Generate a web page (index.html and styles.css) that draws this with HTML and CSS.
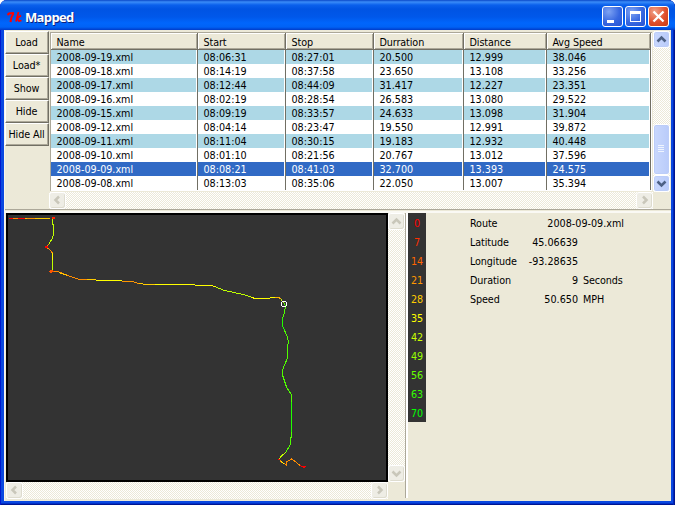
FILE: index.html
```html
<!DOCTYPE html>
<html lang="en">
<head>
<meta charset="utf-8">
<title>Mapped</title>
<link rel="stylesheet" href="styles.css">
</head>
<body>
<div class="window">
  <header class="titlebar">
    <svg class="logo" width="16" height="16" viewBox="0 0 16 16" fill="none" stroke="#f00"><path stroke-width="2" d="M.5 6L2 4.500L7 4M6.500 4.500L4.500 8L3.500 13"/><path stroke-width="1.700" d="M11.500 3L9 12.500M14 6.500L10 9.500L12 12L14.500 11.500"/></svg>
    <h1>Mapped</h1>
    <div class="controls">
      <span class="ctl"><svg width="19" height="19"><path d="M4 13h7v3H4z" fill="#fff"/></svg></span>
      <span class="ctl"><svg width="19" height="19"><path d="M4 4h11v11H4zM5 7v7h9V7z" fill="#fff" fill-rule="evenodd"/></svg></span>
      <span class="ctl close"><svg width="19" height="19"><path d="M4.500 4.500l10 10M14.500 4.500l-10 10" stroke="#fff" stroke-width="2.300"/></svg></span>
    </div>
  </header>
  <main class="client">
    <section class="top">
      <nav class="tools"><button>Load</button><button>Load*</button><button>Show</button><button>Hide</button><button>Hide All</button></nav>
      <div class="listing">
        <div class="table">
          <div class="row head"><span>Name</span><span>Start</span><span>Stop</span><span>Durration</span><span>Distance</span><span>Avg Speed</span></div>
          <div class="row odd"><span>2008-09-19.xml</span><span>08:06:31</span><span>08:27:01</span><span>20.500</span><span>12.999</span><span>38.046</span></div>
          <div class="row"><span>2008-09-18.xml</span><span>08:14:19</span><span>08:37:58</span><span>23.650</span><span>13.108</span><span>33.256</span></div>
          <div class="row odd"><span>2008-09-17.xml</span><span>08:12:44</span><span>08:44:09</span><span>31.417</span><span>12.227</span><span>23.351</span></div>
          <div class="row"><span>2008-09-16.xml</span><span>08:02:19</span><span>08:28:54</span><span>26.583</span><span>13.080</span><span>29.522</span></div>
          <div class="row odd"><span>2008-09-15.xml</span><span>08:09:19</span><span>08:33:57</span><span>24.633</span><span>13.098</span><span>31.904</span></div>
          <div class="row"><span>2008-09-12.xml</span><span>08:04:14</span><span>08:23:47</span><span>19.550</span><span>12.991</span><span>39.872</span></div>
          <div class="row odd"><span>2008-09-11.xml</span><span>08:11:04</span><span>08:30:15</span><span>19.183</span><span>12.932</span><span>40.448</span></div>
          <div class="row"><span>2008-09-10.xml</span><span>08:01:10</span><span>08:21:56</span><span>20.767</span><span>13.012</span><span>37.596</span></div>
          <div class="row selected"><span>2008-09-09.xml</span><span>08:08:21</span><span>08:41:03</span><span>32.700</span><span>13.393</span><span>24.575</span></div>
          <div class="row"><span>2008-09-08.xml</span><span>08:13:03</span><span>08:35:06</span><span>22.050</span><span>13.007</span><span>35.394</span></div>
        </div>
        <div class="hbar"><i class="sb off"><svg width="15" height="14"><path d="M9 3.500L5.500 7L9 10.500"/></svg></i><i class="sb off"><svg width="15" height="14"><path d="M6 3.500L9.500 7L6 10.500"/></svg></i></div>
      </div>
      <div class="vbar live"><i class="sb"><svg width="15" height="15"><path d="M3.500 9.500L7.500 5.500L11.500 9.500"/></svg></i><i class="space"></i><i class="sb thumb"><svg width="15" height="49"><path d="M4 20.500h6M4 22.500h6M4 24.500h6M4 26.500h6"/></svg></i><i class="sb"><svg width="15" height="15"><path d="M3.500 5.500L7.500 9.500L11.500 5.500"/></svg></i></div>
    </section>
    <section class="bottom">
      <div class="mapframe">
        <svg class="map" width="378" height="265" viewBox="8 215 378 265" fill="none" shape-rendering="crispEdges">
          <path stroke="#ff8c00" d="M9 218.500H35"/><path stroke="#f00" d="M9 218.500h4M18 218.500h7"/><path stroke="#ffc800" d="M25 218.500h2M35 218.500h15"/><path stroke="#f20" stroke-width="2" d="M52 218h3"/>
          <path stroke="#bfff00" d="M52.500 219V224L53.500 225V235L52 239L49 244"/>
          <path stroke="#ff8c00" d="M49 244L46 247L49 249L52.500 253"/>
          <path stroke="#f00" stroke-width="2" d="M45 247h3"/>
          <path stroke="#ff0" d="M52.500 253V260"/><path stroke="#bfff00" d="M52.500 260V270"/>
          <path stroke="#f50" d="M50 270.500h3M49 271.500h5M50 272.500h2"/>
          <path stroke="#ff8c00" d="M54 271.500H58L68 275.500L79 279.500H90"/>
          <path stroke="#fc0" d="M59 272.500L67 275.500M87 279.500H96"/>
          <path stroke="#ff0" d="M96 280.500H122"/><path stroke="#ff9500" d="M122 281.500H132L139 283.500"/>
          <path stroke="#fc0" d="M139 283.500L147 284.500H155"/><path stroke="#ff0" d="M155 284.500H195M195 285.500H211L216 287"/>
          <path stroke="#bfff00" d="M216 287L223 290L245 295L252 297.500"/>
          <path stroke="#ff0" d="M251 297.500L256 298.500H270M270 297.500H276"/>
          <path stroke="#ffb000" d="M275 297.500H279L282 300"/><path stroke="#bfff00" d="M281 299.500L284 303"/>
          <path stroke="#50ff00" d="M284 303L285.500 306L284.500 313L282.500 318V326L287.500 337L288.500 342L287.500 347V358L282.500 370V375L286.500 387L291.500 395V434L290 445L286 452"/>
          <path stroke="#20ff00" d="M282.500 318V326L284.500 330M291.500 402V432"/>
          <path stroke="#bfff00" d="M286 452L281 456.500L279 459"/>
          <path stroke="#ff8c00" d="M279 459L282 462.500L286.500 465V462L291.500 459L296 462L300 465.500"/>
          <path stroke="#ff0" d="M281 461.500L284 463.500"/>
          <path stroke="#f00" d="M300 465.500L302 466.500H306M303 467.500h2M278 459.500h2"/>
          <path stroke="#fff" d="M282 301.500h4M282 306.500h4M281.500 302v4M286.500 302v4"/>
        </svg>
        <div class="vbar"><i class="sb off"><svg width="15" height="15"><path d="M3.500 9.500L7.500 5.500L11.500 9.500"/></svg></i><i class="sb off"><svg width="15" height="15"><path d="M3.500 5.500L7.500 9.500L11.500 5.500"/></svg></i></div>
        <div class="hbar"><i class="sb off"><svg width="15" height="14"><path d="M9 3.500L5.500 7L9 10.500"/></svg></i><i class="sb off"><svg width="15" height="14"><path d="M6 3.500L9.500 7L6 10.500"/></svg></i></div>
      </div>
      <div class="divider"></div>
      <div class="legend">
        <span class="s0">0</span><span class="s7">7</span><span class="s14">14</span><span class="s21">21</span><span class="s28">28</span><span class="s35">35</span><span class="s42">42</span><span class="s49">49</span><span class="s56">56</span><span class="s63">63</span><span class="s70">70</span>
      </div>
      <div class="info">
        <span>Route</span><b class="wide">2008-09-09.xml</b>
        <span>Latitude</span><b>45.06639</b><em></em>
        <span>Longitude</span><b>-93.28635</b><em></em>
        <span>Duration</span><b>9</b><em>Seconds</em>
        <span>Speed</span><b>50.650</b><em>MPH</em>
      </div>
    </section>
  </main>
</div>
</body>
</html>
```
FILE: styles.css
```css
* { box-sizing: border-box; }
body {
  margin: 0;
  background: #fff;
  font: 10.7px/14px "DejaVu Sans Condensed", "DejaVu Sans", sans-serif;
  font-stretch: condensed;
  color: #000;
}
svg { display: block; }
.window {
  width: 675px;
  height: 505px;
  padding: 0 4px 4px;
  border-radius: 7px 7px 0 0;
  background: #0a48e0;
  box-shadow: inset 1px 0 #0019cf, inset -1px 0 #001590, inset -2px 0 #0026b8, inset 0 -1px #001590, inset 0 -2px #0030c8;
  overflow: hidden;
}
.titlebar {
  display: flex;
  align-items: center;
  height: 30px;
  margin: 0 -4px;
  padding: 3px 6px 0 7px;
  background: linear-gradient(#0a48c8 0, #3a8cf8 2px, #0a60ec 5px, #0054e3 9px, #0058ea 17px, #0066fc 23px, #0062f6 27px, #003bc8 30px);
}
.titlebar h1 {
  margin: 0 auto 0 2px;
  font: bold 13px/16px "Open Sans", sans-serif;
  letter-spacing: -0.65px;
  color: #fff;
  text-shadow: 1px 1px #0f1f7a;
}
.controls { display: flex; gap: 2px; }
.ctl {
  width: 21px;
  height: 21px;
  border: 1px solid #fff;
  border-radius: 3px;
  background: radial-gradient(circle at 30% 25%, #7ea3f3, #3767e0 55%, #2453d3);
}
.close { background: radial-gradient(circle at 30% 25%, #f0a28a, #e0502d 55%, #c83a12); }

.client {
  height: 471px;
  background: #ece9d8;
  border-left: 1px solid #f6f4ec;
}
.top {
  display: flex;
  height: 180px;
  padding-top: 1px;
  border-bottom: 1px solid #aca899;
}
.tools { width: 44px; }
.tools button {
  display: block;
  width: 44px;
  height: 23px;
  padding: 1px 1px 0 0;
  font: inherit;
  letter-spacing: -0.1px;
  color: inherit;
  background: #ece9d8;
  border: 1px solid;
  border-color: #fff #716f64 #716f64 #fff;
  box-shadow: inset -1px -1px #aca899;
  text-align: center;
  white-space: nowrap;
}
.listing { width: 604px; }
.table {
  width: 602px;
  height: 159px;
  margin: 1px 0 1px 1px;
  border-left: 1px solid #aca899;
  border-top: 1px solid #aca899;
  background: #fff;
}
.row {
  display: grid;
  grid-template: 14px / 147px 88px 88px 90px 83px 104px;
  width: 600px;
}
.row span {
  padding-left: 5.500px;
  border-right: 1px solid #716f64;
  box-shadow: inset -1px 0 #fff;
  line-height: 16px;
  white-space: nowrap;
}
.row.head { grid-template-rows: 17px; letter-spacing: -0.1px; }
.row.head span {
  line-height: 20px;
  background: #ece9d8;
  border-bottom: 1px solid #716f64;
  box-shadow: inset 1px 1px #fff, inset -1px -1px #aca899;
}
.odd { background: #add8e6; }
.selected { background: #316ac5; color: #fff; }

.hbar, .vbar {
  display: flex;
  justify-content: space-between;
  background: repeating-conic-gradient(#fff 0 25%, #ece9d8 0 50%) 0 0 / 2px 2px;
}
.hbar { height: 17px; }
.vbar { flex-direction: column; width: 17px; }
.sb {
  display: block;
  flex: none;
  width: 17px;
  height: 17px;
  padding: 1px;
  border-radius: 3px;
  background: linear-gradient(90deg, #c9d8fd, #b9cbfa);
  border: 1px solid #fff;
  box-shadow: inset 0 0 0 1px #bccdf8;
}
.sb svg { margin: -1px; }
.sb path { fill: none; stroke: #4d6185; stroke-width: 2.500; }
.sb.off {
  background: #eeede5;
  box-shadow: inset -1px -1px #dedccf;
}
.off path { stroke: #c9c7ba; }
.space { flex: 1; }
.thumb { height: 51px; }
.sb.thumb path { stroke: #eef4fe; stroke-width: 1; }
.top .vbar { height: 161px; }

.bottom {
  display: flex;
  height: 291px;
  padding: 3px 0 0 1px;
  box-shadow: inset 0 1px #ece9d8, inset 0 3px #faf9f4;
}
.mapframe {
  display: grid;
  grid-template: 269px 17px / 382px 17px;
  width: 399px;
}
.map {
  width: 382px;
  height: 269px;
  border: 2px solid #000;
  background: #333;
}
.divider {
  width: 3px;
  height: 285px;
  border-left: 1px solid #aca899;
  border-right: 2px solid #fff;
}
.legend { width: 18px; height: 209px; background: #333; text-align: center; }
.legend span { display: block; height: 19px; line-height: 21px; }
.s0 { color: #f00; }
.s7 { color: #ff3000; }
.s14 { color: #ff6600; }
.s21 { color: #ff9900; }
.s28 { color: #ffcc00; }
.s35 { color: #ff0; }
.s42 { color: #ccff00; }
.s49 { color: #99ff00; }
.s56 { color: #66ff00; }
.s63 { color: #33ff00; }
.s70 { color: #0f0; }
.info {
  display: grid;
  grid-template-columns: 52px 56px 46px;
  grid-auto-rows: 19px;
  align-content: start;
  margin-left: 44px;
  line-height: 22px;
  white-space: nowrap;
}
.info b { font-weight: normal; text-align: right; }
.info .wide { grid-column: 2 / 4; }
.info em { font-style: normal; padding-left: 5px; }
.info span, .info em { letter-spacing: -0.1px; }
```
